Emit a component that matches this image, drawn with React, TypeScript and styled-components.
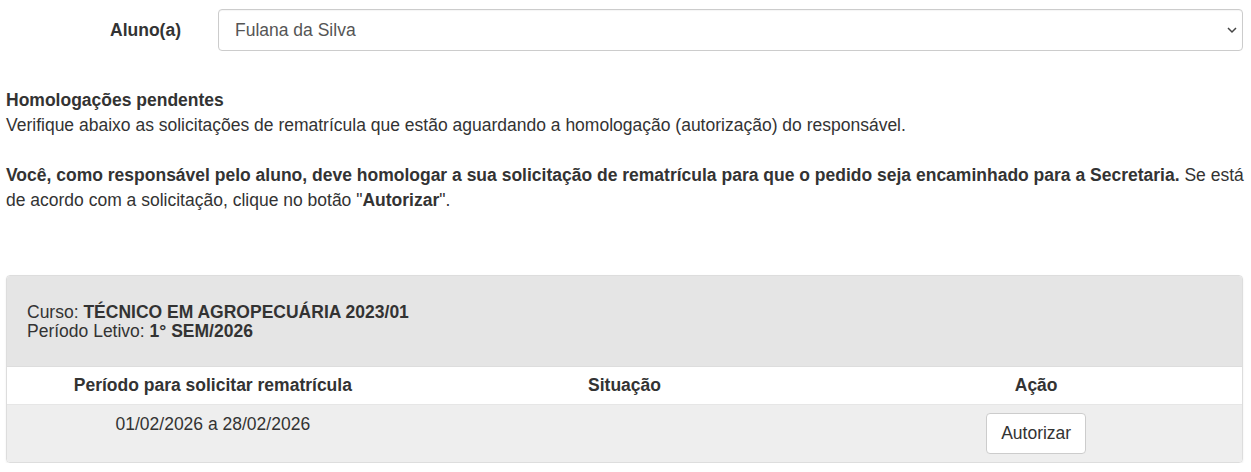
import React from "react";
import styled, { createGlobalStyle } from "styled-components";

const Global = createGlobalStyle`
  html, body { margin: 0; padding: 0; background: #fff; }
  body {
    font-family: "Liberation Sans", Arial, sans-serif;
    font-size: 17.5px;
    color: #333;
  }
`;

const Page = styled.div`
  padding: 9px 8px 0 6px;
`;

const FieldRow = styled.div`
  display: flex;
  align-items: center;
  gap: 37px;
`;

const Label = styled.label`
  width: 175px;
  text-align: right;
  font-weight: bold;
  color: #333;
`;

const SelectWrap = styled.div`
  position: relative;
  flex: 1;
`;

const Select = styled.select`
  appearance: none;
  -webkit-appearance: none;
  width: 100%;
  height: 42px;
  border: 1px solid #ccc;
  border-radius: 4px;
  background: #fff;
  padding: 0 30px 0 16px;
  font-family: "Liberation Sans", Arial, sans-serif;
  font-size: 17.5px;
  color: #555;
  box-shadow: inset 0 1px 1px rgba(0, 0, 0, 0.04);
`;

const Chevron = styled.svg`
  position: absolute;
  right: 6px;
  top: 17px;
  width: 10px;
  height: 8px;
  pointer-events: none;
`;

const Intro = styled.div`
  margin-top: 37px;
  margin-right: -8px;
  line-height: 25px;
`;

const Title = styled.div`
  font-weight: bold;
`;

const Spacer = styled.div`
  height: 25px;
`;

const Panel = styled.div`
  margin-top: 62px;
  border: 1px solid #ddd;
  border-radius: 4px;
  overflow: hidden;
  box-shadow: 0 1px 2px rgba(0, 0, 0, 0.08);
`;

const PanelHeader = styled.div`
  background: #e5e5e5;
  padding: 27px 20px 25px;
  line-height: 19px;
`;

const Table = styled.div`
  display: grid;
  grid-template-columns: repeat(3, 1fr);
`;

const Cell = styled.div<{ $head?: boolean }>`
  text-align: center;
  padding: ${(p) => (p.$head ? "7px 8px" : "8px")};
  line-height: 23px;
  font-weight: ${(p) => (p.$head ? "bold" : "normal")};
  background: ${(p) => (p.$head ? "#fff" : "#eee")};
  border-top: 1px solid ${(p) => (p.$head ? "#ddd" : "#e6e6e6")};
`;

const Button = styled.button`
  font-family: "Liberation Sans", Arial, sans-serif;
  font-size: 17.5px;
  color: #333;
  background: #fff;
  border: 1px solid #ccc;
  border-radius: 4px;
  padding: 0 12px;
  height: 41px;
  line-height: 23px;
  width: 100px;
  cursor: pointer;
`;

export default function App() {
  return (
    <>
      <Global />
      <Page>
        <FieldRow>
          <Label>Aluno(a)</Label>
          <SelectWrap>
            <Select defaultValue="1">
              <option value="1">Fulana da Silva</option>
            </Select>
            <Chevron viewBox="0 0 10 8">
              <path d="M1 2 L5 6 L9 2" fill="none" stroke="#444" strokeWidth="1.5" />
            </Chevron>
          </SelectWrap>
        </FieldRow>

        <Intro>
          <Title>Homologações pendentes</Title>
          <div>
            Verifique abaixo as solicitações de rematrícula que estão aguardando a homologação
            (autorização) do responsável.
          </div>
          <Spacer />
          <div>
            <b>
              Você, como responsável pelo aluno, deve homologar a sua solicitação de rematrícula
              para que o pedido seja encaminhado para a Secretaria.
            </b>{" "}
            Se está de acordo com a solicitação, clique no botão "<b>Autorizar</b>".
          </div>
        </Intro>

        <Panel>
          <PanelHeader>
            <div>
              Curso: <b>TÉCNICO EM AGROPECUÁRIA 2023/01</b>
            </div>
            <div>
              Período Letivo: <b>1° SEM/2026</b>
            </div>
          </PanelHeader>
          <Table>
            <Cell $head>Período para solicitar rematrícula</Cell>
            <Cell $head>Situação</Cell>
            <Cell $head>Ação</Cell>
            <Cell>01/02/2026 a 28/02/2026</Cell>
            <Cell></Cell>
            <Cell>
              <Button>Autorizar</Button>
            </Cell>
          </Table>
        </Panel>
      </Page>
    </>
  );
}
